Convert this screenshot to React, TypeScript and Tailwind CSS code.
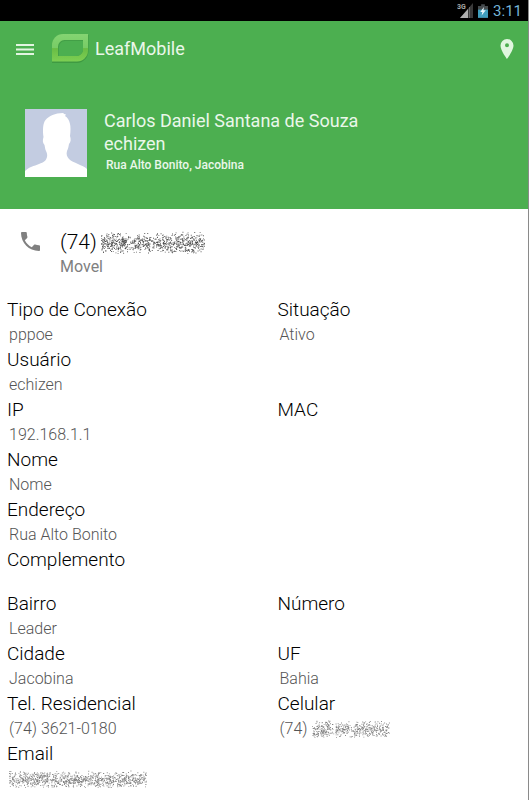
import React from 'react';

type Field = { label: string; value?: string; scribble?: number };

const connection: Field[][] = [
  [{ label: 'Tipo de Conexão', value: 'pppoe' }, { label: 'Situação', value: 'Ativo' }],
  [{ label: 'Usuário', value: 'echizen' }],
  [{ label: 'IP', value: '192.168.1.1' }, { label: 'MAC' }],
  [{ label: 'Nome', value: 'Nome' }],
  [{ label: 'Endereço', value: 'Rua Alto Bonito' }],
];

const contact: Field[][] = [
  [{ label: 'Bairro', value: 'Leader' }, { label: 'Número' }],
  [{ label: 'Cidade', value: 'Jacobina' }, { label: 'UF', value: 'Bahia' }],
  [
    { label: 'Tel. Residencial', value: '(74) 3621-0180' },
    { label: 'Celular', value: '(74)', scribble: 78 },
  ],
  [{ label: 'Email', scribble: 138 }],
];

// Hidden numbers and addresses are covered with a cloud of dots
const Scribble = ({ width, height, color }: { width: number; height: number; color: string }) => {
  let seed = width * 31 + height;
  const next = () => {
    seed = (seed * 16807) % 2147483647;
    return seed / 2147483647;
  };
  for (let i = 0; i < 10; i++) next();

  let d = '';
  for (let i = 0; i < width * height * 0.4; i++) {
    const x = next() * (width - 1);
    const y = ((next() + next()) / 2 - 0.5) * height + height * 0.52;
    const gap = width < 120 && (Math.abs(x / width - 0.27) < 0.03 || Math.abs(x / width - 0.5) < 0.03);
    if (y < 0 || y > height - 1 || (gap && next() > 0.35)) continue;
    d += `M${x.toFixed(1)} ${y.toFixed(1)}h.9v.9h-.9z`;
  }

  return (
    <svg width={width} height={height} viewBox={`0 0 ${width} ${height}`} aria-hidden="true" className="shrink-0">
      <path d={d} fill={color} />
    </svg>
  );
};

const FieldRow = ({ fields }: { fields: Field[] }) => (
  <div className="grid grid-cols-2 gap-x-5">
    {fields.map((field) => (
      <div key={field.label}>
        <dt className="text-[19px] leading-[26px] font-light text-black">{field.label}</dt>
        <dd className="flex h-6 items-center gap-1 pl-0.5 text-base leading-6 font-light text-[#555555]">
          {field.value}
          {field.scribble && <Scribble width={field.scribble} height={18} color="#808080" />}
        </dd>
      </div>
    ))}
  </div>
);

const StatusBar = () => (
  <div className="flex h-[21px] items-center justify-end bg-black pr-[6px] text-[#74b4d6]">
    <svg width="17" height="17" viewBox="0 0 17 17" className="mr-1">
      <path d="M16 1v15H3z" fill="#3a3a3a" />
      <path d="M11 7v9H3z" fill="#b0b0b0" />
      <path d="M12.500 5v11" stroke="#666666" />
      <text x="0" y="7" fontSize="7" fontWeight="bold" fontFamily="Roboto, sans-serif" fill="#a8a8a8">3G</text>
    </svg>
    <svg width="10" height="14" viewBox="0 0 11 15" className="mr-[5px]">
      <path d="M3.500 0h4v2H11v13H0V2h3.500z" fill="#454b4e" />
      <path d="M0 6h11v9H0z" fill="#3f9dbd" />
      <path d="M6.500 3 2.500 8.500h2.300L4 12.500l4.500-5.800H6z" fill="#e8f6fb" />
    </svg>
    <span className="text-[15px] leading-5">3:11</span>
  </div>
);

const LeafLogo = () => (
  <svg width="38" height="30" viewBox="0 0 38 30">
    <defs>
      <linearGradient id="leaf" x1="0" y1="0" x2="0" y2="1">
        <stop offset="0" stopColor="#84d472" />
        <stop offset=".5" stopColor="#78cc66" />
        <stop offset=".53" stopColor="#69bd45" />
        <stop offset="1" stopColor="#7dcf53" />
      </linearGradient>
    </defs>
    <path d="M12 1H37.500V17A12 12 0 0 1 26 29H1V12A11 11 0 0 1 12 1z" fill="#3f9a42" />
    <path d="M12 0H37V16.500A11 11 0 0 1 26 27.500H1V11A11 11 0 0 1 12 0z" fill="url(#leaf)" />
    <path d="M13.500 6H32V15.500A6.500 6.500 0 0 1 25.500 22H7V12.500A6.500 6.500 0 0 1 13.500 6z" fill="#439f47" />
    <path d="M14 7H32V15.500A6.500 6.500 0 0 1 25.500 22H8V13A6 6 0 0 1 14 7z" fill="#4caf50" />
  </svg>
);

const Avatar = () => (
  <svg width="62" height="68" viewBox="0 0 62 68" role="img" aria-label="Carlos" className="shrink-0">
    <path d="M0 0h62v68H0z" fill="#c3cce1" />
    <path
      d="M0 68v-6c4-4 9-5 14-7 5-2 7-3 8-7 .500-2 0-4-1-6-1-2-1-4-1.500-6-2-2-2-5-1-8-1-7-.500-14 2-17C24 7 30 4 38 4c1 1 1.500 1 3 1.500L40 7c5 3 6.500 10 5 20 1 3 1 6-1 8-.500 3-1 5-2 7-1 3 0 6 2 8 4 4 14 6 18 10v8z"
      fill="#ffffff"
    />
  </svg>
);

const App = () => {
  return (
    <div className="min-h-screen border-r border-[#8a8a8a] bg-white font-['Roboto',sans-serif]">
      <StatusBar />

      <header className="h-[188px] bg-[#4caf50] text-[#eaf7ea]">
        {/* Toolbar */}
        <div className="flex h-14 items-center pr-3 pl-[15px]">
          <button type="button" aria-label="Menu">
            <svg width="20" height="14" viewBox="0 0 20 14" className="block">
              <path d="M1 3h18M1 7.500h18M1 12h18" stroke="#e2f5e1" strokeWidth="2" />
            </svg>
          </button>
          <div className="ml-4 flex flex-1 items-center gap-[6px]">
            <LeafLogo />
            <h1 className="text-lg leading-6">LeafMobile</h1>
          </div>
          <button type="button" aria-label="Localização">
            <svg width="18" height="20" viewBox="0 0 18 20" className="block">
              <path
                d="M9 0a6.500 6.500 0 0 0-6.500 6.500C2.500 11.500 9 20 9 20s6.500-8.500 6.500-13.500A6.500 6.500 0 0 0 9 0zm0 4.200a2 2 0 1 1 0 4 2 2 0 0 1 0-4z"
                fill="#e0f6df"
              />
            </svg>
          </button>
        </div>

        {/* Cliente */}
        <div className="flex gap-[17px] px-[25px] pt-8">
          <Avatar />
          <div>
            <p className="text-lg leading-[23px]">Carlos Daniel Santana de Souza</p>
            <p className="text-lg leading-[23px]">echizen</p>
            <p className="pl-0.5 text-xs leading-5 font-medium">Rua Alto Bonito, Jacobina</p>
          </div>
        </div>
      </header>

      <main>
        {/* Telefone */}
        <div className="flex pt-5 pl-[21px]">
          <svg width="19" height="19" viewBox="3 3 18 18" className="mt-[3px] mr-5">
            <path
              d="M6.620 10.790c1.440 2.830 3.760 5.140 6.590 6.590l2.200-2.200c.27-.27.67-.36 1.020-.24 1.120.37 2.330.57 3.570.57.55 0 1 .45 1 1V20c0 .55-.45 1-1 1-9.390 0-17-7.610-17-17 0-.55.45-1 1-1h3.500c.55 0 1 .45 1 1 0 1.250.2 2.450.57 3.570.11.35.03.74-.25 1.020l-2.200 2.200z"
              fill="#808080"
            />
          </svg>
          <div>
            <div className="flex items-center gap-1 text-[21px] leading-[26px] font-light text-black">
              (74)
              <Scribble width={104} height={23} color="#505050" />
            </div>
            <p className="text-base leading-6 text-[#808080]">Movel</p>
          </div>
        </div>

        {/* Dados */}
        <dl className="mt-[18px] pl-[7px]">
          {connection.map((fields) => (
            <FieldRow key={fields[0].label} fields={fields} />
          ))}
          <div className="mb-[18px]">
            <dt className="text-[19px] leading-[26px] font-light text-black">Complemento</dt>
            <dd />
          </div>
          {contact.map((fields) => (
            <FieldRow key={fields[0].label} fields={fields} />
          ))}
        </dl>
      </main>
    </div>
  );
};

export default App;
